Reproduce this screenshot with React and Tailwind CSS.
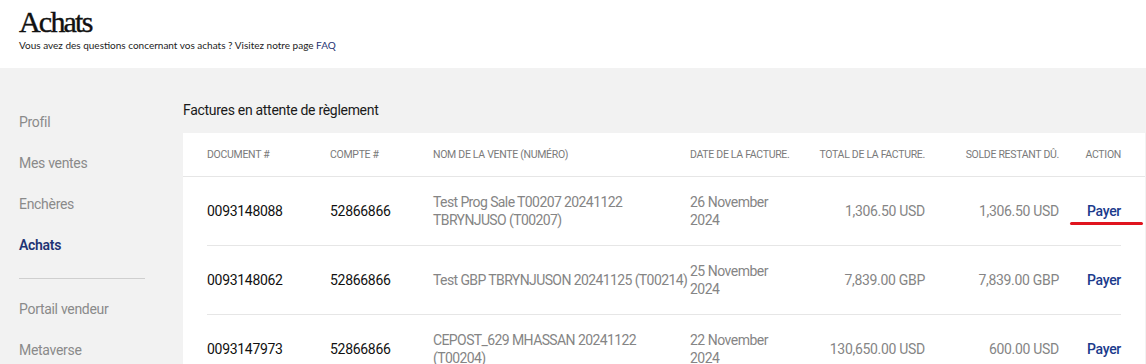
import React from "react";

const rows = [
  {
    doc: "0093148088",
    acct: "52866866",
    name: ["Test Prog Sale T00207 20241122", "TBRYNJUSO (T00207)"],
    date: ["26 November", "2024"],
    total: "1,306.50 USD",
    solde: "1,306.50 USD",
    active: true,
  },
  {
    doc: "0093148062",
    acct: "52866866",
    name: ["Test GBP TBRYNJUSON 20241125 (T00214)"],
    date: ["25 November", "2024"],
    total: "7,839.00 GBP",
    solde: "7,839.00 GBP",
  },
  {
    doc: "0093147973",
    acct: "52866866",
    name: ["CEPOST_629 MHASSAN 20241122", "(T00204)"],
    date: ["22 November", "2024"],
    total: "130,650.00 USD",
    solde: "600.00 USD",
  },
];

const cols =
  "grid grid-cols-[123px_103px_257px_110px_125px_134px_62px] items-center";

function NavItem({ children, active }) {
  return (
    <div
      className={
        "h-[41px] flex items-center text-[14px] tracking-[-0.3px] " +
        (active ? "text-[#1f3474] font-semibold" : "text-[#8a8a8a]")
      }
    >
      {children}
    </div>
  );
}

export default function App() {
  return (
    <div
      className="w-[1146px] min-h-[364px] bg-[#f2f2f2] overflow-hidden"
      style={{ fontFamily: "Roboto, 'Liberation Sans', sans-serif" }}
    >
      <header className="bg-white h-[68px] px-[19px] pt-[5px]">
        <h1
          className="text-[30px] leading-[33px] tracking-[-1.8px] text-[#111]"
          style={{ fontFamily: "'Liberation Serif', 'DejaVu Serif', serif", WebkitTextStroke: "0.4px #111" }}
        >
          Achats
        </h1>
        <p
          className="text-[10px] leading-[14px] text-[#222]"
          style={{ fontFamily: "Lato, 'Liberation Sans', sans-serif" }}
        >
          Vous avez des questions concernant vos achats ? Visitez notre page{" "}
          <span className="text-[#1f3474]">FAQ</span>
        </p>
      </header>

      <div className="flex">
        <aside className="w-[183px] shrink-0 pl-[19px] pt-[34px]">
          <NavItem>Profil</NavItem>
          <NavItem>Mes ventes</NavItem>
          <NavItem>Enchères</NavItem>
          <NavItem active>Achats</NavItem>
          <div className="mt-[12px] h-px w-[126px] bg-[#cfcfcf]" />
          <div className="mt-[10px]">
            <NavItem>Portail vendeur</NavItem>
            <NavItem>Metaverse</NavItem>
          </div>
        </aside>

        <main className="flex-1 pr-[1px]">
          <div className="pt-[32px] h-[52px] text-[14px] leading-[20px] tracking-[-0.3px] text-[#1a1a1a]">
            Factures en attente de règlement
          </div>
          <div className="mt-[13px] bg-white">
            <div className="h-[44px] border-b border-[#e6e6e6] px-[24px] flex items-center">
              <div
                className={
                  cols +
                  " w-full text-[10.5px] text-[#7a7a7a] uppercase tracking-[-0.3px]"
                }
              >
                <div>Document #</div>
                <div>Compte #</div>
                <div>Nom de la vente (numéro)</div>
                <div>Date de la facture.</div>
                <div className="text-right">Total de la facture.</div>
                <div className="text-right">Solde restant dû.</div>
                <div className="text-right">Action</div>
              </div>
            </div>
            <div className="px-[24px]">
              {rows.map((r, i) => (
                <div
                  key={i}
                  className={
                    cols +
                    " h-[69px] border-b border-[#e6e6e6] text-[14px] leading-[18px] tracking-[-0.3px]"
                  }
                >
                  <div className="text-[#111]">{r.doc}</div>
                  <div className="text-[#111]">{r.acct}</div>
                  <div className="text-[#858585] tracking-[-0.6px]">
                    {r.name.map((l, j) => (
                      <div key={j} className="whitespace-nowrap">
                        {l}
                      </div>
                    ))}
                  </div>
                  <div className="text-[#858585] tracking-[-0.5px]">
                    {r.date.map((l, j) => (
                      <div key={j} className="whitespace-nowrap">
                        {l}
                      </div>
                    ))}
                  </div>
                  <div className="text-right text-[#858585]">{r.total}</div>
                  <div className="text-right text-[#858585]">{r.solde}</div>
                  <div className="text-right relative">
                    <span className="text-[#1b3a8c] font-medium">Payer</span>
                    {r.active && (
                      <div className="absolute right-[-22px] top-[20px] h-[3px] w-[73px] rounded-full bg-[#e0141e]" />
                    )}
                  </div>
                </div>
              ))}
            </div>
          </div>
        </main>
      </div>
    </div>
  );
}
